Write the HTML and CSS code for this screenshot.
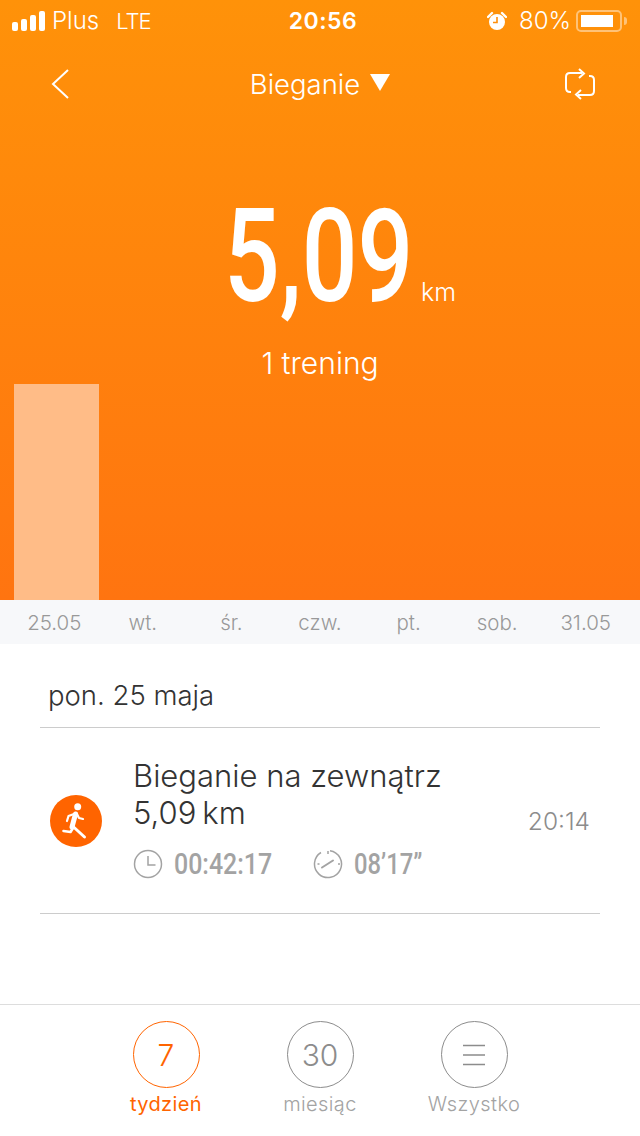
FILE: index.html
```html
<!DOCTYPE html>
<html lang="pl">
<head>
    <meta charset="UTF-8">
    <meta name="viewport" content="width=device-width, initial-scale=1.0">
    <title>Bieganie</title>
    <link rel="stylesheet" href="styles.css">
</head>
<body>

    <!-- Orange summary area -->
    <section class="hero">
        <div class="status-bar">
            <div class="status-left">
                <div class="signal">
                    <span class="signal-bar s1"></span>
                    <span class="signal-bar s2"></span>
                    <span class="signal-bar s3"></span>
                    <span class="signal-bar s4"></span>
                </div>
                <span class="carrier">Plus</span>
                <span class="network">LTE</span>
            </div>
            <div class="status-time">20:56</div>
            <div class="status-right">
                <svg class="alarm" width="20" height="20" viewBox="0 0 20 20">
                    <circle cx="10" cy="11" r="8" fill="#fff"/>
                    <path d="M1 6 L5 2 M15 2 L19 6" stroke="#fff" stroke-width="2.4" stroke-linecap="round"/>
                    <path d="M10 6 V11.5 H6" fill="none" stroke="#ff8f0a" stroke-width="1.6"/>
                </svg>
                <span class="battery-text">80%</span>
                <div class="battery"><div class="battery-level"></div></div>
                <div class="battery-tip"></div>
            </div>
        </div>

        <div class="nav">
            <svg width="20" height="32" viewBox="0 0 20 32">
                <path d="M18 2 L3 16 L18 30" fill="none" stroke="#fff" stroke-width="2"/>
            </svg>
            <div class="nav-title">Bieganie <span class="caret"></span></div>
            <svg width="32" height="32" viewBox="0 0 32 32">
                <path d="M18 5 H6 Q2 5 2 9 V20 Q2 24 6 24 H7 M14 27 H26 Q30 27 30 23 V12 Q30 8 26 8 H25" fill="none" stroke="#fff" stroke-width="2"/>
                <path d="M15 1 L20 5.500 L15 10 M17 22 L12 26.500 L17 31" fill="none" stroke="#fff" stroke-width="2"/>
            </svg>
        </div>

        <div class="total">
            <span class="total-value"><span class="total-digits">5,09</span></span><span class="total-unit">km</span>
        </div>
        <div class="sessions">1 trening</div>

        <div class="chart">
            <div class="chart-bar"></div>
        </div>
    </section>

    <!-- Week days -->
    <div class="axis">
        <span>25.05</span>
        <span>wt.</span>
        <span>śr.</span>
        <span>czw.</span>
        <span>pt.</span>
        <span>sob.</span>
        <span>31.05</span>
    </div>

    <!-- Workouts -->
    <section class="workouts">
        <h2 class="day-title">pon. 25 maja</h2>
        <div class="workout">
            <svg class="run-icon" width="52" height="52" viewBox="0 0 52 52">
                <circle cx="26" cy="26" r="26" fill="#ff6400"/>
                <circle cx="27.700" cy="11.700" r="3.500" fill="#fff"/>
                <path d="M25.500 19 L22 32" stroke="#fff" stroke-width="5" stroke-linecap="round"/>
                <path d="M22.500 31 L34.500 42" stroke="#fff" stroke-width="3" stroke-linecap="round"/>
                <path d="M23 33 L20.500 37 L13.500 36" fill="none" stroke="#fff" stroke-width="2.600" stroke-linecap="round" stroke-linejoin="round"/>
                <path d="M24 19 L18.500 21 L17 26" fill="none" stroke="#fff" stroke-width="2.200" stroke-linecap="round" stroke-linejoin="round"/>
                <path d="M27 19 L29 23 L33 24" fill="none" stroke="#fff" stroke-width="2.200" stroke-linecap="round" stroke-linejoin="round"/>
            </svg>
            <div class="workout-info">
                <div class="workout-name">Bieganie na zewnątrz</div>
                <div class="workout-distance">5,09<span class="thin-gap"></span>km</div>
                <div class="workout-stats">
                    <div class="stat stat-time">
                        <svg width="30" height="30" viewBox="0 0 30 30">
                            <circle cx="15" cy="15" r="13.500" fill="none" stroke="#a3a3a3" stroke-width="1.500"/>
                            <path d="M15 7 V16 H22.500" fill="none" stroke="#a3a3a3" stroke-width="1.500"/>
                        </svg>
                        <span class="stat-value">00:42:17</span>
                    </div>
                    <div class="stat">
                        <svg width="30" height="30" viewBox="0 0 30 30">
                            <path d="M17 1.700 A13.500 13.500 0 1 1 8 3.500" fill="none" stroke="#a3a3a3" stroke-width="1.500"/>
                            <path d="M9 18.500 L20 11.500" stroke="#a3a3a3" stroke-width="2" stroke-linecap="round"/>
                            <path d="M15 2 V5 M4.500 15 H6.500 M25 15 H27" stroke="#a3a3a3" stroke-width="1.500"/>
                        </svg>
                        <span class="stat-value">08’17”</span>
                    </div>
                </div>
            </div>
            <div class="workout-time">20:14</div>
        </div>
    </section>

    <!-- Period switch -->
    <nav class="periods">
        <div class="period active">
            <div class="period-circle">7</div>
            <div class="period-label">tydzień</div>
        </div>
        <div class="period">
            <div class="period-circle">30</div>
            <div class="period-label">miesiąc</div>
        </div>
        <div class="period">
            <div class="period-circle">
                <svg width="24" height="22" viewBox="0 0 24 22">
                    <path d="M1 1.500 H23 M1 11 H23 M1 20.500 H23" stroke="#8c8c8c" stroke-width="1.500"/>
                </svg>
            </div>
            <div class="period-label">Wszystko</div>
        </div>
    </nav>

</body>
</html>
```

FILE: styles.css
```css
* {
    box-sizing: border-box;
}

body {
    margin: 0;
    width: 640px;
    height: 1136px;
    overflow: hidden;
    background-color: #fff;
    font-family: Inter, "Noto Sans", sans-serif;
    color: #333;
}

.hero {
    height: 600px;
    display: flex;
    flex-direction: column;
    color: #fff;
    background: linear-gradient(#ff9209, #ff7410);
}

/* Status bar */
.status-bar {
    height: 41px;
    display: flex;
    align-items: center;
    justify-content: space-between;
    padding: 0 14px 0 12px;
    font-size: 24px;
    font-weight: 300;
}

.status-left {
    width: 200px;
    display: flex;
    align-items: center;
}

.signal {
    display: flex;
    align-items: flex-end;
    gap: 3px;
    margin-right: 7px;
}

.signal-bar {
    width: 6px;
    background-color: #fff;
    border-radius: 2px;
}

.s1 { height: 9px; }
.s2 { height: 12px; }
.s3 { height: 16px; }
.s4 { height: 20px; }

.carrier {
    margin-right: 17px;
}

.network {
    font-size: 22px;
    letter-spacing: -1px;
}

.status-time {
    font-size: 23px;
    font-weight: 600;
    letter-spacing: 0.5px;
    margin-left: 8px;
}

.status-right {
    width: 200px;
    display: flex;
    align-items: center;
    justify-content: flex-end;
}

.alarm {
    margin-right: 12px;
}

.battery-text {
    margin-right: 5px;
}

.battery {
    width: 46px;
    height: 22px;
    padding: 3px;
    border: 2px solid rgba(255, 255, 255, 0.45);
    border-radius: 5px;
}

.battery-level {
    width: 32px;
    height: 100%;
    background-color: #fff;
}

.battery-tip {
    width: 3px;
    height: 8px;
    margin: 0 -1px 0 2px;
    background-color: rgba(255, 255, 255, 0.45);
    border-radius: 0 3px 3px 0;
}

/* Nav */
.nav {
    height: 86px;
    display: flex;
    align-items: center;
    justify-content: space-between;
    padding: 0 44px 0 50px;
}

.nav-title {
    font-size: 27.5px;
    font-weight: 300;
    display: flex;
    align-items: center;
    gap: 10px;
    margin-left: 6px;
}

.caret {
    width: 0;
    height: 0;
    margin-bottom: 4px;
    border-left: 10px solid transparent;
    border-right: 10px solid transparent;
    border-top: 17px solid #fff;
}

/* Total */
.total {
    height: 170px;
    margin-top: 45px;
    display: flex;
    align-items: baseline;
    padding-left: 228px;
    line-height: 170px;
}

.total-value {
    width: 184px;
    font-family: Roboto, sans-serif;
    font-size: 130px;
    font-weight: 500;
}

/* no condensed family installed, so the digits are squeezed */
.total-digits {
    display: inline-block;
    margin-left: -4px;
    transform: scaleX(0.755);
    transform-origin: left;
}

.total-unit {
    font-size: 25px;
    font-weight: 300;
    margin-left: 9px;
}

.sessions {
    margin-top: 1px;
    text-align: center;
    font-size: 30px;
    font-weight: 300;
    line-height: 40px;
}

.chart {
    margin-top: auto;
    padding-left: 14px;
}

.chart-bar {
    width: 85px;
    height: 216px;
    background-color: #ffbc87;
}

/* Days axis */
.axis {
    height: 44px;
    display: grid;
    grid-template-columns: repeat(7, 1fr);
    align-items: center;
    padding: 0 10px;
    background-color: #f7f8fa;
    font-size: 20.5px;
    font-weight: 300;
    color: #999;
    text-align: center;
}

/* Workouts */
.workouts {
    height: 360px;
    padding: 0 40px;
}

.day-title {
    height: 84px;
    margin: 0;
    padding: 35px 0 0 8px;
    border-bottom: 1px solid #ccc;
    font-size: 27.5px;
    font-weight: 300;
    line-height: 32px;
    color: #333;
}

.workout {
    height: 186px;
    display: flex;
    align-items: center;
    padding: 0 10px;
    border-bottom: 1px solid #ccc;
}

.run-icon {
    flex-shrink: 0;
    margin-right: 31px;
}

.workout-info {
    flex: 1;
}

.workout-name,
.workout-distance {
    font-size: 31px;
    font-weight: 300;
    line-height: 37px;
    color: #333;
}

.workout-name {
    margin-top: -3px;
}

.thin-gap {
    margin-left: 6px;
}

.workout-stats {
    display: flex;
    margin-top: 16px;
    color: #a3a3a3;
}

.stat {
    display: flex;
    align-items: center;
    gap: 11px;
    font-family: Roboto, sans-serif;
    font-size: 29px;
    font-weight: 500;
}

.stat-value {
    display: inline-block;
    transform: scaleX(0.82);
    transform-origin: left;
}

.stat-time {
    width: 180px;
}

.stat-time .stat-value {
    transform: scaleX(0.86);
}

.workout-time {
    font-size: 24.5px;
    font-weight: 300;
    color: #8c8c8c;
}

/* Period switch */
.periods {
    height: 132px;
    display: flex;
    justify-content: center;
    border-top: 1px solid #ddd;
    padding-top: 16px;
}

.period {
    width: 154px;
    display: flex;
    flex-direction: column;
    align-items: center;
    color: #a3a3a3;
}

.period-circle {
    width: 67px;
    height: 67px;
    display: flex;
    align-items: center;
    justify-content: center;
    border: 1px solid #8c8c8c;
    border-radius: 50%;
    font-size: 30px;
    font-weight: 300;
    color: #8c8c8c;
}

.period-label {
    margin-top: 2px;
    font-size: 20px;
    line-height: 28px;
    font-weight: 300;
    letter-spacing: 0.4px;
}

.period.active {
    color: #ff6400;
}

.period.active .period-circle {
    border-color: #ff6400;
    color: #ff6400;
}

.period.active .period-label {
    font-weight: 400;
}
```
